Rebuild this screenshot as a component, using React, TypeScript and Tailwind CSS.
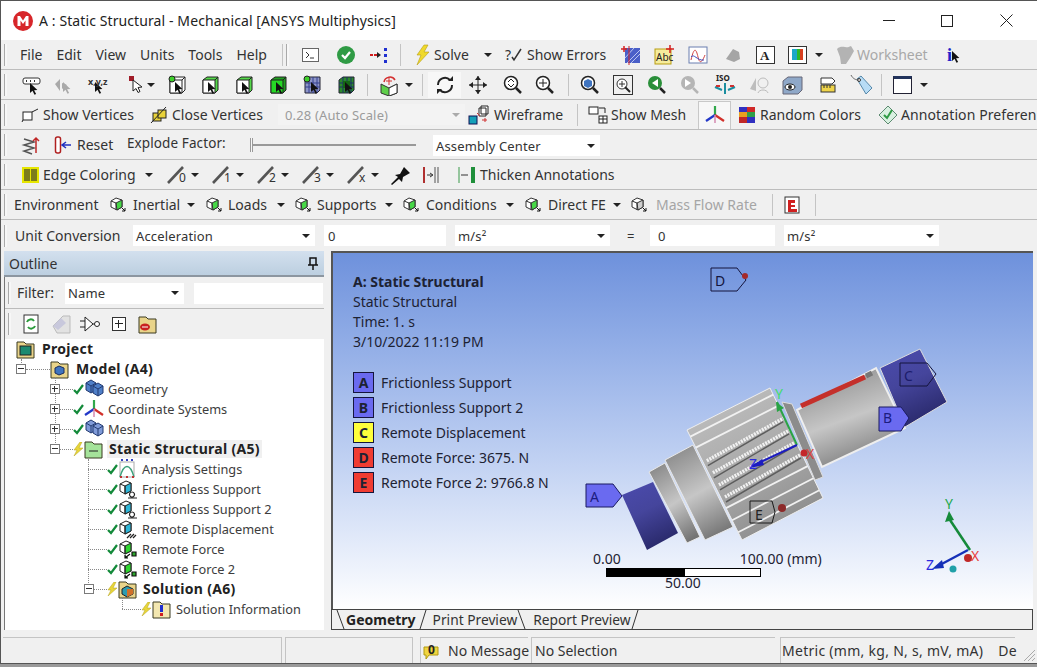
import type { ReactNode } from "react";

const Svg = ({ children, w = 20, h = 20, className = "" }: { children: ReactNode; w?: number; h?: number; className?: string }) => (
  <svg width={w} height={h} viewBox={`0 0 ${w} ${h}`} className={`shrink-0 ${className}`}>
    {children}
  </svg>
);

const Caret = ({ className = "" }: { className?: string }) => (
  <span className={`inline-block h-0 w-0 shrink-0 border-x-[4px] border-t-[4px] border-x-transparent border-t-[#222] ${className}`} />
);

const Grip = () => <span className="mr-1 ml-[3px] h-[22px] w-[3px] shrink-0 border-l border-[#a9a9a9] bg-[#f7f7f7]" />;
const Sep = ({ className = "" }: { className?: string }) => <span className={`h-[22px] w-0 shrink-0 border-l border-[#c4c4c4] ${className}`} />;

const Cursor = ({ x, y, c = "#111" }: { x: number; y: number; c?: string }) => (
  <path d={`M${x} ${y}l0 10 2.5-2.2 2 4 1.6-.8-2-3.8 3.3-.3z`} fill={c} />
);

const BoxCursor = ({ fill = "#fff", top = "#fff", dot = false }: { fill?: string; top?: string; dot?: boolean }) => (
  <Svg>
    <path d="M3 5l4-3h11v13l-3 3H3z" fill={top} stroke="#222" />
    <path d="M3 5h12v13H3z" fill={fill} stroke="#222" />
    <path d="M15 5l3-3" stroke="#222" />
    {dot && <circle cx="5" cy="4" r="3" fill="#3ecf2b" stroke="#222" />}
    <Cursor x={8} y={7} />
  </Svg>
);

const MeshBox = ({ dark = false }: { dark?: boolean }) => (
  <Svg>
    <path d="M3 5l4-3h11v13l-3 3H3z" fill={dark ? "#2b8a2b" : "#8c94c9"} stroke="#223" />
    <path d="M3 8h15M3 12h15M7 2v16M11 2v16M15 2v16" stroke={dark ? "#1c2f6b" : "#35408e"} strokeWidth="1" />
    {dark ? <rect x="7" y="6" width="7" height="7" fill="#146614" /> : <circle cx="5" cy="4" r="3" fill="#3ecf2b" stroke="#222" />}
    <Cursor x={9} y={7} />
  </Svg>
);

const Mag = ({ children, c = "#222" }: { children?: ReactNode; c?: string }) => (
  <Svg>
    <circle cx="8" cy="8" r="6.5" fill="#fff" stroke={c} strokeWidth="1.5" />
    <path d="M13 13l5 5" stroke={c} strokeWidth="2.5" />
    {children}
  </Svg>
);

const SmallCube = ({ face = "#fff" }: { face?: string }) => (
  <Svg w={19} h={16}>
    <path d="M2 4l5-3 6 2v7l-5 3-6-3z" fill="#fff" stroke="#333" />
    <path d="M7 6l6-3v7l-5 3z" fill={face} stroke="#333" />
    <path d="M2 4l5 2v7" fill="none" stroke="#333" />
    <path d="M13 11l3 3M13 14h3v-3" stroke="#111" strokeWidth="1" fill="none" />
  </Svg>
);

const Edge = ({ n }: { n: string }) => (
  <span className="flex items-center">
    <span className="relative h-[20px] w-[24px]">
      <Svg w={24} h={20}>
        <path d="M2 18L17 2" stroke="#555" strokeWidth="2.6" />
      </Svg>
      <span className="absolute top-[6px] left-[13px] text-[12px] leading-[14px] text-[#333]">{n}</span>
    </span>
    <Caret className="ml-[1px]" />
  </span>
);

const Check = () => (
  <Svg w={11} h={12}>
    <path d="M1 7l3 3 6-8" fill="none" stroke="#138a3a" strokeWidth="2.2" />
  </Svg>
);

const Bolt = () => (
  <Svg w={11} h={14}>
    <path d="M7 0L1 8h3l-3 6 9-8H6l3-6z" fill="#e8d63a" stroke="#b5a31c" strokeWidth=".5" />
  </Svg>
);

const Folder = ({ children, c = "#e9d48a" }: { children?: ReactNode; c?: string }) => (
  <Svg w={19} h={20}>
    <path d="M1 3h7l2 2h8v14H1z" fill={c} stroke="#3a3a22" />
    {children}
  </Svg>
);

const TreeCube = ({ face, mark }: { face: string; mark: "support" | "disp" | "force" }) => (
  <Svg w={20} h={20}>
    <path d="M2 5l6-3 5 2v8l-6 3-5-3z" fill="#fff" stroke="#222" />
    <path d="M7 7l6-3v8l-6 3z" fill={face} stroke="#222" />
    <path d="M2 5l5 2v8" fill="none" stroke="#222" />
    {mark === "support" && <path d="M14 13a2.5 2.5 0 1 0 .01 0M10 19h9" fill="none" stroke="#222" strokeWidth="1.2" />}
    {mark === "disp" && <path d="M9 19l4-4M12 19l4-4M15 19l3-3" stroke="#222" strokeWidth="1.3" />}
    {mark === "force" && <path d="M14 13h4v4h-4zM12 15l-5 4M7 16v3h3" fill="#2da82d" stroke="#111" strokeWidth="1.2" />}
  </Svg>
);

const Triad = () => (
  <Svg w={20} h={20}>
    <path d="M10 10V1" stroke="#31a84b" strokeWidth="2.2" />
    <path d="M10 10L1 16" stroke="#2338c8" strokeWidth="2.2" />
    <path d="M10 10l9 6" stroke="#d2302a" strokeWidth="2.2" />
    <path d="M10 10v8" stroke="#d58ab0" strokeWidth="1.5" />
  </Svg>
);

const Expander = ({ open }: { open: boolean }) => (
  <span className="relative h-[10px] w-[10px] shrink-0 border border-[#7b7b7b] bg-white">
    <span className="absolute top-[3px] left-[1px] h-px w-[6px] bg-[#333]" />
    {!open && <span className="absolute top-[1px] left-[3px] h-[6px] w-px bg-[#333]" />}
  </span>
);

const Blocks = ({ c = "#4f7fc8" }: { c?: string }) => (
  <Svg w={20} h={20}>
    <path d="M2 4l5-3 5 3v7l-5 3-5-3z" fill={c} stroke="#223a70" />
    <path d="M9 7l5-3 5 3v7l-5 3-5-3z" fill={c} stroke="#223a70" />
    <path d="M2 4l5 3 5-3M7 7v7M9 7l5 3 5-3M14 10v7" fill="none" stroke="#223a70" />
  </Svg>
);

type TreeRow = {
  label: string;
  indent: string;
  textGap: string;
  bold?: boolean;
  open?: boolean;
  status?: "check" | "bolt";
  icon: ReactNode;
  highlight?: boolean;
};

const treeRows: TreeRow[] = [
  {
    label: "Project",
    indent: "ml-[11px]",
    bold: true,
    textGap: "ml-[7px]",
    icon: (
      <Folder>
        <rect x="4" y="7" width="11" height="9" fill="#1c8a70" stroke="#222" />
      </Folder>
    ),
  },
  {
    label: "Model (A4)",
    indent: "ml-[11px]",
    bold: true,
    open: true,
    textGap: "ml-[7px]",
    icon: (
      <Folder>
        <path d="M5 9l4-2 5 2v5l-5 2-4-2z" fill="#3f74c0" stroke="#1b2d5c" />
      </Folder>
    ),
  },
  { label: "Geometry", indent: "ml-[45px]", open: false, status: "check", textGap: "ml-[4px]", icon: <Blocks /> },
  { label: "Coordinate Systems", indent: "ml-[45px]", open: false, status: "check", textGap: "ml-[4px]", icon: <Triad /> },
  { label: "Mesh", indent: "ml-[45px]", open: false, status: "check", textGap: "ml-[4px]", icon: <Blocks c="#7f9ad8" /> },
  {
    label: "Static Structural (A5)",
    indent: "ml-[45px]",
    bold: true,
    open: true,
    status: "bolt",
    highlight: true,
    textGap: "ml-[4px]",
    icon: (
      <Folder c="#a5e39a">
        <path d="M5 12h9" stroke="#222" />
      </Folder>
    ),
  },
  {
    label: "Analysis Settings",
    indent: "ml-[83px]",
    status: "check",
    textGap: "ml-[6px]",
    icon: (
      <Svg w={18} h={20}>
        <rect x="2" y="3" width="14" height="15" fill="#fff" stroke="#aaa" />
        <path d="M2 18C6 4 12 4 16 18" fill="none" stroke="#3aa07a" strokeWidth="1.4" />
        <path d="M3 1h2M8 1h2M13 1h2" stroke="#3340c0" strokeWidth="2" />
        <path d="M2 18h2M8 18h2M14 18h2" stroke="#c03333" strokeWidth="2" />
      </Svg>
    ),
  },
  { label: "Frictionless Support", indent: "ml-[83px]", status: "check", textGap: "ml-[4px]", icon: <TreeCube face="#2eb6d8" mark="support" /> },
  { label: "Frictionless Support 2", indent: "ml-[83px]", status: "check", textGap: "ml-[4px]", icon: <TreeCube face="#2eb6d8" mark="support" /> },
  { label: "Remote Displacement", indent: "ml-[83px]", status: "check", textGap: "ml-[4px]", icon: <TreeCube face="#2eb6d8" mark="disp" /> },
  { label: "Remote Force", indent: "ml-[83px]", status: "check", textGap: "ml-[4px]", icon: <TreeCube face="#2fd62f" mark="force" /> },
  { label: "Remote Force 2", indent: "ml-[83px]", status: "check", textGap: "ml-[4px]", icon: <TreeCube face="#2fd62f" mark="force" /> },
  {
    label: "Solution (A6)",
    indent: "ml-[79px]",
    bold: true,
    open: true,
    status: "bolt",
    textGap: "ml-[6px]",
    icon: (
      <Folder>
        <path d="M4 10l5-3 6 3v5l-6 3-5-3z" fill="#2c9cb0" stroke="#222" />
        <path d="M9 10l6 0v5l-6 3z" fill="#d0702a" />
      </Folder>
    ),
  },
  {
    label: "Solution Information",
    indent: "ml-[117px]",
    status: "bolt",
    textGap: "ml-[5px]",
    icon: (
      <Folder c="#f3e7b0">
        <rect x="8" y="6" width="3" height="7" fill="#2030d0" />
        <rect x="8" y="14" width="3" height="3" fill="#d02020" />
      </Folder>
    ),
  },
];

const legend = [
  { k: "A", c: "bg-[#6a6af0]", t: "Frictionless Support" },
  { k: "B", c: "bg-[#6a6af0]", t: "Frictionless Support 2" },
  { k: "C", c: "bg-[#ffff3c]", t: "Remote Displacement" },
  { k: "D", c: "bg-[#f03c32]", t: "Remote Force: 3675. N" },
  { k: "E", c: "bg-[#f03c32]", t: "Remote Force 2: 9766.8 N" },
];

const Row = ({ children, className = "" }: { children: ReactNode; className?: string }) => (
  <div className={`flex h-[30px] shrink-0 items-center overflow-hidden whitespace-nowrap border-b border-[#bdbdbd] [&>*]:shrink-0 ${className}`}>
    <Grip />
    {children}
  </div>
);

const Combo = ({ text, className = "", dim = false }: { text: string; className?: string; dim?: boolean }) => (
  <span className={`flex h-[21px] shrink-0 items-center justify-between pr-[5px] pl-[3px] text-[13px] tracking-[0.15px] ${dim ? "bg-[#f3f3f3] text-[#9b9b9b]" : "bg-white"} ${className}`}>
    <span>{text}</span>
    <Caret className={dim ? "border-t-[#aaa]" : ""} />
  </span>
);

// model drawing, coords taken from the page (origin at 332,252)
const P = (pts: [number, number][]) => pts.map(([x, y]) => `${x - 332},${y - 252}`).join(" ");
const lerp = (a: number, b: number, t: number) => a + (b - a) * t;
const teeth = [0.06, 0.16, 0.27, 0.38, 0.49, 0.6, 0.71, 0.82, 0.93];

const GearTeeth = () => (
  <g>
    {teeth.map((t, i) => {
      const x1 = lerp(687, 742, t) - 332;
      const y1 = lerp(430, 540, t) - 252;
      const x2 = lerp(770, 823, t) - 332;
      const y2 = lerp(388, 498, t) - 252;
      const busy = i > 1 && i < 6;
      return (
        <g key={t}>
          {busy && <line x1={x1 + 6} y1={y1 + 6} x2={x2 - 1} y2={y2 + 4} stroke="#5d5d5d" strokeWidth="1.5" />}
          <line
            x1={x1 + (busy ? 5 : 0)}
            y1={y1 + (busy ? 1 : 0)}
            x2={x2}
            y2={y2}
            stroke="#f1f1f1"
            strokeWidth={busy ? 3.5 : 1.8}
            strokeDasharray={busy ? "2 1" : undefined}
          />
        </g>
      );
    })}
  </g>
);

const Model = () => (
  <svg className="absolute inset-0 h-full w-full" viewBox="1 1 700 356">
    <defs>
      <linearGradient id="blue" x1="0" y1="0" x2=".4" y2="1">
        <stop offset="0" stopColor="#4b4bae" />
        <stop offset=".5" stopColor="#45459c" />
        <stop offset="1" stopColor="#2b2b6e" />
      </linearGradient>
      <linearGradient id="grey" x1=".3" y1="0" x2=".7" y2="1">
        <stop offset="0" stopColor="#8d8d8d" />
        <stop offset=".5" stopColor="#c6c6c6" />
        <stop offset="1" stopColor="#747474" />
      </linearGradient>
      <linearGradient id="gear" x1=".2" y1="0" x2=".7" y2="1">
        <stop offset="0" stopColor="#c0c0c0" />
        <stop offset=".55" stopColor="#a8a8a8" />
        <stop offset="1" stopColor="#8a8a8a" />
      </linearGradient>
    </defs>
    <polygon points={P([[622, 495], [653, 482], [678, 533], [647, 550]])} fill="url(#blue)" />
    <polygon points={P([[649, 472], [665, 463], [700, 537], [687, 543]])} fill="url(#grey)" stroke="#e9e9e9" />
    <polygon points={P([[665, 460], [693, 445], [733, 527], [705, 540]])} fill="url(#grey)" stroke="#e9e9e9" />
    <polygon points={P([[687, 430], [770, 388], [823, 498], [742, 540]])} fill="url(#gear)" stroke="#eee" />
    <GearTeeth />
    <polygon points={P([[782, 402], [792, 404], [823, 477], [815, 480]])} fill="#8c8c8c" stroke="#ddd" />
    <polygon points={P([[797, 410], [876, 368], [905, 428], [822, 467]])} fill="url(#grey)" stroke="#eee" strokeWidth="2" />
    <polygon points={P([[880, 368], [920, 349], [947, 402], [905, 427]])} fill="url(#blue)" stroke="#ddd" />
    <line x1={801 - 332} y1={406 - 252} x2={865 - 332} y2={377 - 252} stroke="#c4302b" strokeWidth="5" />
    <line x1={866 - 332} y1={376 - 252} x2={872 - 332} y2={373 - 252} stroke="#777" strokeWidth="5" />

    {/* center triad */}
    <line x1={797 - 332} y1={445 - 252} x2={777 - 332} y2={402 - 252} stroke="#2aa345" strokeWidth="2" />
    <polygon points="444,150 452,156 445,160" fill="#2aa345" />
    <line x1={797 - 332} y1={445 - 252} x2={752 - 332} y2={466 - 252} stroke="#1c1cc0" strokeWidth="2" />
    <polygon points="418,216 430,207 432,213" fill="#1c1cc0" />
    <circle cx={804 - 332} cy={453 - 252} r="3.5" fill="#c4282b" />
    <text x={443} y={147} fontSize="14" fill="#3fdc6a" fontFamily="Noto Sans">Y</text>
    <text x={417} y={217} fontSize="14" fill="#2a2ae0" fontFamily="Noto Sans">Z</text>
    <text x={474} y={207} fontSize="14" fill="#e04040" fontFamily="Noto Sans">X</text>

    {/* probes */}
    <polygon points={P([[586, 484], [613, 484], [622, 496], [613, 507], [586, 507]])} fill="#6a6af0" stroke="#1a1a60" />
    <text x={258} y={250} fontSize="14" fill="#1c1c80" fontFamily="Noto Sans">A</text>
    <polygon points={P([[879, 407], [901, 407], [909, 418], [901, 431], [879, 431]])} fill="#6a6af0" stroke="#1a1a60" />
    <text x={551} y={171} fontSize="14" fill="#1c1c80" fontFamily="Noto Sans">B</text>
    <polygon points={P([[900, 363], [927, 363], [936, 374], [927, 386], [900, 386]])} fill="none" stroke="#15153d" />
    <text x={572} y={129} fontSize="14" fill="#1c1c6b" fontFamily="Noto Sans">C</text>
    <polygon points={P([[711, 268], [737, 268], [746, 280], [737, 291], [711, 291]])} fill="none" stroke="#15153d" />
    <text x={383} y={34} fontSize="14" fill="#15153d" fontFamily="Noto Sans">D</text>
    <circle cx={745 - 332} cy={276 - 252} r="3" fill="#a52a2a" />
    <polygon points={P([[750, 501], [772, 501], [775, 512], [772, 523], [750, 523]])} fill="none" stroke="#1a1a1a" />
    <text x={423} y={268} fontSize="14" fill="#222" fontFamily="Noto Sans">E</text>
    <circle cx={782 - 332} cy={508 - 252} r="4" fill="#8c2a2a" />

    {/* corner triad */}
    <line x1={638} y1={298} x2={618} y2={268} stroke="#158a3a" strokeWidth="2.5" />
    <polygon points="617,259 613,270 622,268" fill="#158a3a" />
    <line x1={636} y1={298} x2={606} y2={314} stroke="#1530b8" strokeWidth="2.5" />
    <polygon points="600,317 610,308 612,316" fill="#1530b8" />
    <circle cx={636} cy={306} r="4" fill="#c02828" />
    <circle cx={621} cy={317} r="3.5" fill="#20a0a8" />
    <text x={613} y={257} fontSize="14" fill="#1ca84a" fontFamily="Noto Sans">Y</text>
    <text x={594} y={318} fontSize="14" fill="#2a2ae0" fontFamily="Noto Sans">Z</text>
    <text x={639} y={309} fontSize="14" fill="#e84040" fontFamily="Noto Sans">X</text>
  </svg>
);

export default function App() {
  return (
    <div className="h-[667px] w-[1037px] overflow-hidden bg-[#9a9a9a]">
      <div className="flex h-[664px] flex-col border-t border-b border-l border-[#555] bg-[#f0f0f0] font-['Noto_Sans',sans-serif] text-[14px] leading-[18px] text-[#333]">
        {/* title bar */}
        <div className="flex h-[39px] shrink-0 items-center bg-white pl-[12px] text-[#222]">
          <Svg w={20} h={20}>
            <circle cx="10" cy="10" r="10" fill="#d7262a" />
            <path d="M4.5 15V5h2.500l3 4.500L13 5h2.500v10h-3V9.500L10 13 7.500 9.500V15z" fill="#fff" />
          </Svg>
          <span className="ml-[6px] tracking-[0.1px]">A : Static Structural - Mechanical [ANSYS Multiphysics]</span>
          <span className="ml-auto flex items-center">
            <span className="mr-[46px] h-px w-[12px] bg-[#222]" />
            <span className="mr-[47px] h-[12px] w-[12px] border border-[#222]" />
            <span className="mr-[24px]">
              <Svg w={13} h={13}>
                <path d="M.5.5l12 12M12.500.5l-12 12" stroke="#222" />
              </Svg>
            </span>
          </span>
        </div>

        {/* File menu row */}
        <Row>
          <span className="ml-[9px] flex w-[247px] gap-[14px]">
            <span>File</span>
            <span>Edit</span>
            <span>View</span>
            <span>Units</span>
            <span>Tools</span>
            <span>Help</span>
          </span>
          <Sep className="ml-[15px]" />
          <Grip />
          <Svg w={18} h={16} className="ml-[9px]">
            <rect x=".5" y="1.500" width="16" height="13" fill="#fff" stroke="#666" />
            <path d="M4 5l3 3-3 3M8 11h4" fill="none" stroke="#333" />
          </Svg>
          <span className="ml-[16px]">
            <Svg w={20} h={20}>
              <circle cx="10" cy="10" r="9" fill="#2f9b45" />
              <path d="M6 10l3 3 5-6" fill="none" stroke="#fff" strokeWidth="2.200" />
            </Svg>
          </span>
          <span className="ml-[13px]">
            <Svg w={20} h={18}>
              <path d="M1 9h8" stroke="#d01c1c" strokeWidth="2" strokeDasharray="3 1" />
              <path d="M8 6l4 3-4 3z" fill="#222" />
              <rect x="15" y="2" width="3" height="3" fill="#2030d0" />
              <rect x="15" y="8" width="3" height="3" fill="#2030d0" />
              <rect x="15" y="14" width="3" height="3" fill="#2030d0" />
            </Svg>
          </span>
          <Sep className="ml-[11px]" />
          <span className="ml-[13px]">
            <Svg w={18} h={22}>
              <path d="M10 1L3 11h4l-4 10 12-13h-5l4-7z" fill="#efd92c" stroke="#b79d12" strokeWidth=".6" />
            </Svg>
          </span>
          <span className="ml-[2px] w-[35px]">Solve</span>
          <Caret className="ml-[15px]" />
          <span className="ml-[13px] flex w-[22px] items-center">
            <span>?</span>
            <Svg w={12} h={14}>
              <path d="M1 9l2 3 7-11" fill="none" stroke="#333" strokeWidth="1.500" />
            </Svg>
          </span>
          <span className="w-[79px]">Show Errors</span>
          <span className="ml-[13px]">
            <Svg w={22} h={20}>
              <rect x="6" y="3" width="15" height="15" fill="#4a5fc8" />
              <path d="M8 18l13-13M12 18l9-9M6 13l9-10" stroke="#b9c4ef" />
              <path d="M5 1v6M2 4h6" stroke="#d42020" strokeWidth="1.500" />
              <path d="M10 1v19" stroke="#d42020" />
            </Svg>
          </span>
          <span className="ml-[13px]">
            <Svg w={22} h={20}>
              <rect x="1" y="4" width="16" height="15" fill="#f6ec9c" stroke="#b79d12" />
              <text x="2" y="16" fontSize="10" fill="#222" fontFamily="Noto Sans">Abc</text>
              <path d="M16 0v8M12 4h8" stroke="#d42020" strokeWidth="1.500" />
            </Svg>
          </span>
          <span className="ml-[12px]">
            <Svg w={20} h={20}>
              <rect x="1" y="2" width="18" height="16" fill="#fff" stroke="#6a7fb0" />
              <path d="M3 15C6 2 8 3 10 12s5 3 7-2" fill="none" stroke="#d04040" />
              <path d="M3 12C6 8 9 16 16 15" fill="none" stroke="#4050c0" />
            </Svg>
          </span>
          <span className="ml-[17px]">
            <Svg w={16} h={16}>
              <path d="M1 12L8 2l6 3 1 7-6 3z" fill="#a5a5a5" />
            </Svg>
          </span>
          <span className="ml-[15px]">
            <Svg w={20} h={20}>
              <rect x=".5" y="1.500" width="18" height="17" fill="#fff" stroke="#333" />
              <text x="4" y="15" fontSize="13" fontWeight="700" fill="#222" fontFamily="Liberation Serif">A</text>
            </Svg>
          </span>
          <span className="ml-[12px]">
            <Svg w={20} h={20}>
              <rect x=".5" y="1.500" width="18" height="17" fill="#fff" stroke="#333" />
              <rect x="4" y="4" width="5" height="11" fill="#1ca8c8" />
              <rect x="9" y="4" width="3" height="11" fill="#2cb82c" />
              <rect x="12" y="4" width="3" height="11" fill="#d84020" />
            </Svg>
          </span>
          <Caret className="ml-[7px]" />
          <span className="ml-[12px]">
            <Svg w={20} h={20}>
              <path d="M2 4c3-3 6-2 8-2s2 1 6-1l3 5-4 7-4 6H6l-1-7z" fill="#b3b3b3" />
            </Svg>
          </span>
          <span className="ml-[2px] w-[71px] text-[#a8a8a8]">Worksheet</span>
          <span className="ml-[19px] font-['Liberation_Serif',serif] text-[18px] font-bold text-[#2222c8]">i</span>
          <Svg w={11} h={16} className="mt-[6px]">
            <Cursor x={0} y={1} />
          </Svg>
        </Row>

        {/* selection row */}
        <Row>
          <Svg w={20} h={20} className="ml-[11px]">
            <rect x="1" y="3" width="17" height="6" rx="2" fill="#fff" stroke="#333" />
            <path d="M4 6h1M8 6h1M12 6h1" stroke="#333" strokeWidth="2" />
            <Cursor x={8} y={8} />
          </Svg>
          <Svg w={20} h={20} className="ml-[12px]">
            <path d="M1 9l5-5v12zM8 8l5 2-5 4z" fill="#a9a9a9" />
            <Cursor x={9} y={7} c="#a9a9a9" />
          </Svg>
          <span className="relative ml-[14px] h-[20px] w-[22px]">
            <span className="absolute top-[-2px] left-0 text-[9px] font-bold text-[#333]">x,y,z</span>
            <Svg w={20} h={20}>
              <Cursor x={7} y={7} />
            </Svg>
          </span>
          <Svg w={18} h={20} className="ml-[18px]">
            <rect x="1" y="1" width="5" height="5" fill="#a01c28" />
            <path d="M5 5v11l3-2.500 2 4 2-1-2-4 4-.5z" fill="#fff" stroke="#222" />
          </Svg>
          <Caret className="ml-[1px]" />
          <span className="ml-[12px]">
            <BoxCursor dot />
          </span>
          <span className="ml-[13px]">
            <BoxCursor top="#55d84a" />
          </span>
          <span className="ml-[14px]">
            <BoxCursor top="#55d84a" />
          </span>
          <span className="ml-[14px]">
            <BoxCursor fill="#25d825" top="#1fa01f" />
          </span>
          <span className="ml-[14px]">
            <MeshBox />
          </span>
          <span className="ml-[14px]">
            <MeshBox dark />
          </span>
          <Sep className="ml-[11px]" />
          <span className="ml-[10px]">
            <Svg w={22} h={22}>
              <path d="M3 10l8 4 8-4v9l-8 3-8-3z" fill="#5fcf4a" stroke="#333" />
              <path d="M11 14l8-4v9l-8 3z" fill="#fff" stroke="#333" />
              <path d="M6 8a6 6 0 0 1 11-2" fill="none" stroke="#d43030" strokeWidth="1.500" />
              <path d="M11 3v8M8 7h6" stroke="#d43030" />
            </Svg>
          </span>
          <Caret className="ml-[5px]" />
          <Sep className="ml-[9px]" />
          <span className="ml-[5px] flex h-[26px] w-[33px] items-center justify-center bg-[#f7f7f7]">
            <Svg w={20} h={20}>
              <path d="M3 10a7 7 0 0 1 12-5M17 10a7 7 0 0 1-12 5" fill="none" stroke="#222" strokeWidth="2" />
              <path d="M13 6h5V1zM7 14H2v5z" fill="#222" />
            </Svg>
          </span>
          <span className="ml-[7px]">
            <Svg w={20} h={20}>
              <path d="M10 1v18M1 10h18" stroke="#222" />
              <path d="M10 1l-3 4h6zM10 19l-3-4h6zM1 10l4-3v6zM19 10l-4-3v6z" fill="#222" />
            </Svg>
          </span>
          <span className="ml-[15px]">
            <Mag>
              <path d="M5 7l3-3 3 3M5 9l3 3 3-3" fill="none" stroke="#222" />
            </Mag>
          </span>
          <span className="ml-[12px]">
            <Mag>
              <path d="M8 4v8M4 8h8" stroke="#222" />
            </Mag>
          </span>
          <Sep className="ml-[13px]" />
          <span className="ml-[11px]">
            <Mag>
              <path d="M4 6l4-2 4 2v5l-4 2-4-2z" fill="#3f74c0" />
            </Mag>
          </span>
          <span className="ml-[13px] flex h-[20px] w-[20px] items-center justify-center border border-[#333]">
            <Svg w={16} h={16}>
              <circle cx="7" cy="7" r="5" fill="#fff" stroke="#333" />
              <path d="M10 10l5 5" stroke="#222" strokeWidth="2" />
              <path d="M7 4v6M4 7h6" stroke="#333" />
            </Svg>
          </span>
          <span className="ml-[14px]">
            <Svg>
              <circle cx="8" cy="8" r="7" fill="#2a8f3a" />
              <path d="M13 13l5 5" stroke="#222" strokeWidth="2.500" />
              <path d="M11 4L5 8l6 4z" fill="#fff" />
            </Svg>
          </span>
          <span className="ml-[13px]">
            <Svg>
              <circle cx="8" cy="8" r="7" fill="#b5b5b5" />
              <path d="M13 13l5 5" stroke="#b5b5b5" strokeWidth="2.500" />
              <path d="M5 4l6 4-6 4z" fill="#fff" />
            </Svg>
          </span>
          <span className="ml-[13px]">
            <Svg w={24} h={24}>
              <text x="3" y="8" fontSize="8" fontWeight="700" fill="#222" fontFamily="Noto Sans">ISO</text>
              <path d="M12 10v11M2 14l7 3M22 14l-7 3" stroke="#1a8ea0" strokeWidth="2" />
              <path d="M3 13h4M17 13h4" stroke="#d03030" strokeWidth="2" />
            </Svg>
          </span>
          <span className="ml-[11px]">
            <Svg w={22} h={20}>
              <path d="M2 14L8 3v13z" fill="#bdbdbd" />
              <circle cx="15" cy="8" r="5" fill="none" stroke="#bbb" />
              <path d="M10 18c1-4 9-4 10 0" fill="none" stroke="#bbb" />
            </Svg>
          </span>
          <span className="ml-[12px]">
            <Svg w={22} h={22}>
              <path d="M1 7l5-4h14v13l-4 4H1z" fill="#8fa8c8" stroke="#667" />
              <ellipse cx="8" cy="13" rx="5" ry="3" fill="#fff" stroke="#222" />
              <circle cx="8" cy="13" r="2" fill="#222" />
            </Svg>
          </span>
          <span className="ml-[14px]">
            <Svg w={20} h={20}>
              <path d="M3 3h11l3 3-3 3H3z" fill="#fff" stroke="#333" />
              <rect x="3" y="10" width="14" height="7" fill="#efd44a" stroke="#333" />
              <path d="M6 10v3M9 10v3M12 10v3" stroke="#333" />
            </Svg>
          </span>
          <span className="ml-[12px]">
            <Svg w={24} h={22}>
              <path d="M7 5l4-3 11 12-6 6z" fill="#b8dcf5" stroke="#5588aa" />
              <circle cx="9" cy="6" r="1.500" fill="#fff" stroke="#333" />
              <path d="M1 1c2 4 5 5 8 5" fill="none" stroke="#666" />
            </Svg>
          </span>
          <Sep className="ml-[7px]" />
          <span className="ml-[11px] h-[18px] w-[19px] border border-[#223] border-t-[3px] border-t-[#22335c] bg-white" />
          <Caret className="ml-[8px]" />
        </Row>

        {/* display row */}
        <Row>
          <Svg w={20} h={18} className="ml-[10px]">
            <rect x="2" y="6" width="9" height="8" fill="#fff" stroke="#222" />
            <path d="M11 6l6-3M1 16l1-2" stroke="#222" />
          </Svg>
          <span className="ml-[2px] w-[90px]">Show Vertices</span>
          <Svg w={20} h={18} className="ml-[17px]">
            <rect x="3" y="7" width="8" height="8" fill="#e8d23a" stroke="#222" />
            <rect x="8" y="4" width="8" height="8" fill="#e8d23a" stroke="#222" />
            <path d="M1 17L16 1" stroke="#222" />
          </Svg>
          <span className="ml-[2px] w-[90px]">Close Vertices</span>
          <Combo text="0.28 (Auto Scale)" dim className="ml-[16px] w-[187px] pl-[7px]" />
          <span className="ml-[3px]">
            <Svg w={24} h={22}>
              <rect x="1" y="12" width="8" height="8" fill="#15a0b8" stroke="#115" />
              <path d="M13 2h7v8h-7zM11 4h7v8h-7z" fill="#fff" stroke="#222" />
              <path d="M9 9l3 3M14 16h5M17 14v4" stroke="#d03030" />
            </Svg>
          </span>
          <span className="ml-[2px] w-[69px]">Wireframe</span>
          <Sep className="ml-[14px]" />
          <Svg w={22} h={20} className="ml-[10px]">
            <rect x="1" y="2" width="9" height="7" fill="#fff" stroke="#222" />
            <rect x="11" y="11" width="8" height="7" fill="#fff" stroke="#222" />
            <path d="M15 11v7M11 14h8M11 3h6v5" fill="none" stroke="#222" />
          </Svg>
          <span className="ml-[1px] w-[76px]">Show Mesh</span>
          <span className="ml-[11px] flex h-[28px] w-[33px] items-center justify-center border-x border-t border-[#c8c8c8] bg-[#f7f7f7]">
            <Triad />
          </span>
          <Svg w={16} h={16} className="ml-[8px]">
            <rect width="8" height="5" fill="#3030c0" />
            <rect x="8" width="8" height="5" fill="#d02828" />
            <rect y="5" width="8" height="5" fill="#e8a020" />
            <rect x="8" y="5" width="8" height="5" fill="#2fa04a" />
            <rect y="10" width="8" height="6" fill="#c02828" />
            <rect x="8" y="10" width="8" height="6" fill="#3030c0" />
          </Svg>
          <span className="ml-[5px] w-[102px]">Random Colors</span>
          <Svg w={20} h={20} className="ml-[16px]">
            <path d="M10 1l9 9-9 9-9-9z" fill="#d8f0e0" stroke="#5c8a70" />
            <path d="M6 10l3 3 5-8" fill="none" stroke="#2f9b45" strokeWidth="2" />
          </Svg>
          <span className="ml-[3px] tracking-[0.1px]">Annotation Preferen</span>
        </Row>

        {/* explode row */}
        <Row>
          <Svg w={20} h={20} className="ml-[10px]">
            <path d="M3 4l10 3-10 3 10 3-10 3 8 3" fill="none" stroke="#555" strokeWidth="1.500" />
            <path d="M15 18V3M12 6l3-3 3 3" fill="none" stroke="#c02828" strokeWidth="1.500" />
          </Svg>
          <Svg w={20} h={18} className="ml-[13px]">
            <rect x="1.500" y="1" width="5" height="16" rx="2" fill="#fff" stroke="#b02020" strokeWidth="1.500" />
            <path d="M17 9H9M12 6L8 9l4 3" fill="none" stroke="#2030c0" strokeWidth="1.500" />
          </Svg>
          <span className="ml-[3px] w-[36px]">Reset</span>
          <span className="-mt-[3px] ml-[14px] w-[99px] text-[13.5px] tracking-[0.1px]">Explode Factor:</span>
          <span className="relative ml-[24px] h-[2px] w-[166px] bg-[#999]">
            <span className="absolute top-[-6px] left-0 h-[14px] w-[3px] border-x border-[#999] bg-[#f7f7f7]" />
          </span>
          <Combo text="Assembly Center" className="mt-[2px] ml-[17px] w-[167px]" />
        </Row>

        {/* edge coloring row */}
        <Row>
          <span className="ml-[11px] flex h-[16px] w-[17px] gap-px bg-[#e6e600] p-[2px]">
            <span className="flex-1 bg-[#7d7d1c]" />
            <span className="flex-1 bg-[#7d7d1c]" />
          </span>
          <span className="ml-[4px] w-[93px]">Edge Coloring</span>
          <Caret className="ml-[9px]" />
          <span className="ml-[13px] flex items-center gap-[12px]">
            <Edge n="0" />
            <Edge n="1" />
            <Edge n="2" />
            <Edge n="3" />
            <Edge n="x" />
          </span>
          <span className="ml-[11px]">
            <Svg w={22} h={20}>
              <path d="M1 19l7-7-3-2 5-1 4-7 6 6-7 4-1 5-3-3-7 6z" fill="#111" />
            </Svg>
          </span>
          <Svg w={18} h={18} className="ml-[10px]">
            <path d="M2 1v16" stroke="#b03030" strokeWidth="2" />
            <path d="M5 9h5M8 7l3 2-3 2" fill="none" stroke="#333" />
            <path d="M13 1v16M16 1v16" stroke="#555" />
          </Svg>
          <Svg w={20} h={18} className="ml-[18px]">
            <path d="M1 1v16" stroke="#3a9a4a" />
            <path d="M3 9h7" stroke="#333" />
            <rect x="13" y="1" width="4" height="16" fill="#1f8f3a" />
          </Svg>
          <span className="ml-[2px]">Thicken Annotations</span>
        </Row>

        {/* environment row */}
        <Row>
          <span className="ml-[3px] w-[86px]">Environment</span>
          <span className="ml-[9px]">
            <SmallCube face="#47d847" />
          </span>
          <span className="ml-[5px] w-[48px]">Inertial</span>
          <Caret className="ml-[6px]" />
          <span className="ml-[10px]">
            <SmallCube face="#47d847" />
          </span>
          <span className="ml-[4px] w-[39px]">Loads</span>
          <Caret className="ml-[10px]" />
          <span className="ml-[9px]">
            <SmallCube face="#47d847" />
          </span>
          <span className="ml-[4px] w-[59px]">Supports</span>
          <Caret className="ml-[9px]" />
          <span className="ml-[9px]">
            <SmallCube face="#47d847" />
          </span>
          <span className="ml-[5px] w-[72px]">Conditions</span>
          <Caret className="ml-[8px]" />
          <span className="ml-[10px]">
            <SmallCube face="#47d847" />
          </span>
          <span className="ml-[5px] w-[58px]">Direct FE</span>
          <Caret className="ml-[7px]" />
          <span className="ml-[9px]">
            <SmallCube face="#cfcfcf" />
          </span>
          <span className="ml-[7px] w-[101px] text-[#a5a5a5]">Mass Flow Rate</span>
          <Sep className="ml-[15px]" />
          <Svg w={22} h={20} className="ml-[10px]">
            <rect x="2" y="2" width="14" height="16" fill="#fff" stroke="#333" />
            <path d="M5 5h7v3h-4v2h4v2H8v2h6v3H5z" fill="#d02020" />
          </Svg>
          <Sep className="ml-[10px]" />
        </Row>

        {/* unit conversion row */}
        <Row className="h-[31px] border-b-0">
          <span className="ml-[4px] w-[105px]">Unit Conversion</span>
          <Combo text="Acceleration" className="ml-[13px] w-[182px]" />
          <span className="ml-[9px] flex h-[21px] w-[122px] items-center bg-white pl-[4px] text-[13px]">0</span>
          <Combo text="m/s²" className="ml-[9px] w-[155px]" />
          <span className="ml-[17px] w-[8px] text-[13px]">=</span>
          <span className="ml-[15px] flex h-[21px] w-[125px] items-center bg-white pl-[8px] text-[13px]">0</span>
          <Combo text="m/s²" className="ml-[9px] w-[155px]" />
        </Row>

        {/* main */}
        <div className="flex min-h-0 flex-1 pb-[7px]">
          {/* outline panel */}
          <div className="flex w-[323px] shrink-0 flex-col pl-[3px]">
            <div className="flex h-[26px] shrink-0 items-center justify-between border-b-2 border-[#8c96a0] bg-gradient-to-b from-[#d3e0ee] to-[#bccfe0] pt-[1px] pr-[5px] pl-[5px]">
              <span>Outline</span>
              <Svg w={12} h={14}>
                <path d="M3 1h6v7H3zM1 8h10M6 8v5" fill="none" stroke="#111" strokeWidth="1.500" />
              </Svg>
            </div>
            <div className="flex min-h-0 flex-1 flex-col border-l border-[#777] bg-white">
              <div className="flex h-[32px] shrink-0 items-center border-b border-[#bbb] bg-[#f0f0f0]">
                <Grip />
                <span className="ml-[2px] w-[37px]">Filter:</span>
                <Combo text="Name" className="mt-[1px] ml-[11px] w-[119px]" />
                <span className="mt-[1px] ml-[10px] h-[21px] w-[129px] bg-white" />
              </div>
              <div className="flex h-[30px] shrink-0 items-center bg-[#f0f0f0]">
                <Grip />
                <Svg w={18} h={20} className="ml-[7px]">
                  <rect x="2" y="1" width="14" height="18" fill="#fff" stroke="#333" />
                  <path d="M5 8a4 4 0 0 1 7-1M13 12a4 4 0 0 1-7 1" fill="none" stroke="#2a9a3a" strokeWidth="2" />
                </Svg>
                <Svg w={20} h={20} className="ml-[11px]">
                  <path d="M2 12L12 2h7v17H6z" fill="#e2e2e2" stroke="#bbb" />
                  <path d="M2 12l8-8 5 5-8 7z" fill="#c8c8dc" />
                </Svg>
                <Svg w={22} h={20} className="ml-[8px]">
                  <path d="M6 3v14l8-7zM1 7h5M1 13h5M14 10h3" fill="#fff" stroke="#222" />
                  <circle cx="18" cy="10" r="2.500" fill="#fff" stroke="#222" />
                </Svg>
                <span className="relative ml-[11px] h-[14px] w-[14px] border border-[#333] bg-white">
                  <span className="absolute top-[5px] left-[2px] h-px w-[8px] bg-[#222]" />
                  <span className="absolute top-[2px] left-[5px] h-[8px] w-px bg-[#222]" />
                </span>
                <span className="ml-[12px]">
                  <Folder>
                    <ellipse cx="7" cy="13" rx="5" ry="3.500" fill="#c82020" />
                    <path d="M4 13h6" stroke="#fff" />
                  </Folder>
                </span>
              </div>
              {/* tree */}
              <div className="relative flex-1">
                {/* tree guide lines */}
                <span className="absolute top-[20px] left-[16px] h-[6px] w-0 border-l border-dotted border-[#888]" />
                <span className="absolute top-[38px] left-[50px] h-[72px] w-0 border-l border-dotted border-[#888]" />
                <span className="absolute top-[120px] left-[83px] h-[130px] w-0 border-l border-dotted border-[#888]" />
                <span className="absolute top-[258px] left-[117px] h-[12px] w-0 border-l border-dotted border-[#888]" />
                {treeRows.map((r) => (
                  <div key={r.label} className={`flex h-[20px] items-center ${r.indent}`}>
                    {r.open !== undefined && <Expander open={r.open} />}
                    {r.open !== undefined && <span className={`h-0 border-t border-dotted border-[#888] ${r.status ? "w-[13px]" : "w-[24px]"}`} />}
                    {r.open === undefined && r.status && <span className="h-0 w-[19px] border-t border-dotted border-[#888]" />}
                    {r.status === "check" && <Check />}
                    {r.status === "bolt" && <Bolt />}
                    {r.icon}
                    <span
                      className={`${r.textGap} whitespace-nowrap ${r.bold ? "font-bold tracking-[0.3px] text-[#222]" : "text-[12.75px] text-[#3d3d3d]"} ${
                        r.highlight ? "bg-[#f0f0f0] px-[2px]" : ""
                      }`}
                    >
                      {r.label}
                    </span>
                  </div>
                ))}
              </div>
            </div>
          </div>

          {/* splitter */}
          <div className="w-[7px] shrink-0" />

          {/* viewport */}
          <div className="flex min-w-0 flex-1 flex-col pr-[4px]">
            <div className="relative h-[358px] shrink-0 border-t-2 border-l-2 border-[#555] bg-gradient-to-b from-[#6e91dc] to-white pt-[20px] pl-[20px] text-[#1d2233]">
              <Model />
              <div className="relative">
                <div className="font-bold">A: Static Structural</div>
                <div className="mt-[2px]">Static Structural</div>
                <div className="mt-[2px]">Time: 1. s</div>
                <div className="mt-[2px]">3/10/2022 11:19 PM</div>
                <div className="mt-[21px] flex flex-col gap-[4px]">
                  {legend.map((l) => (
                    <div key={l.k} className="flex items-center">
                      <span className={`flex h-[21px] w-[21px] items-center justify-center border border-[#15153d] font-bold ${l.c}`}>{l.k}</span>
                      <span className="ml-[7px]">{l.t}</span>
                    </div>
                  ))}
                </div>
              </div>
              {/* scale */}
              <div className="absolute top-[297px] left-[260px] w-[240px]">
                <div className="flex">
                  <span>0.00</span>
                  <span className="ml-[119px]">100.00 (mm)</span>
                </div>
                <div className="ml-[13px] flex h-[9px] w-[155px] border border-black bg-white">
                  <span className="w-[78px] bg-black" />
                </div>
                <div className="-mt-[3px] ml-[72px]">50.00</div>
              </div>
            </div>
            {/* tabs */}
            <div className="flex h-[21px] shrink-0 items-center border border-[#444] bg-[#f0f0f0] pl-[3px] text-[13.75px]">
              <Svg w={10} h={19}>
                <path d="M2 0l7 19" stroke="#333" />
              </Svg>
              <span className="ml-[1px] text-[14px] font-bold text-[#222]">Geometry</span>
              <Svg w={10} h={19} className="ml-[3px]">
                <path d="M1 19L7 0" stroke="#333" />
              </Svg>
              <span className="ml-[4px]">Print Preview</span>
              <Svg w={10} h={19}>
                <path d="M1 0l7 19" stroke="#333" />
              </Svg>
              <span className="ml-[6px]">Report Preview</span>
              <Svg w={10} h={19}>
                <path d="M1 19L7 0" stroke="#333" />
              </Svg>
            </div>
          </div>
        </div>

        {/* status bar */}
        <div className="flex h-[26px] shrink-0 whitespace-nowrap bg-[#f0f0f0]">
          <span className="ml-[2px] w-[279px] border-t border-r border-[#c4c4c4]" />
          <span className="ml-[3px] w-[128px] border-t border-l border-r border-[#c4c4c4]" />
          <span className="ml-[7px] flex w-[108px] items-center border-t border-l border-[#c4c4c4]">
            <Svg w={20} h={20} className="ml-[1px]">
              <path d="M2 6h14v8H7l-3 4v-4H2z" fill="#f0d540" stroke="#b09a10" />
              <text x="6" y="13" fontSize="12" fontWeight="700" fill="#222" fontFamily="Noto Sans">0</text>
            </Svg>
            <span className="ml-[6px]">No Message</span>
          </span>
          <span className="ml-[3px] flex w-[244px] items-center border-t border-l border-[#c4c4c4] pl-[3px]">No Selection</span>
          <span className="ml-[5px] flex w-[235px] items-center border-t border-l border-[#c4c4c4] pl-[1px] tracking-[0.28px]">
            Metric (mm, kg, N, s, mV, mA)
            <span className="ml-[15px]">De</span>
          </span>
          <Svg w={20} h={26} className="ml-[1px]">
            <path d="M8 24L19 13M12 24l7-7M16 24l3-3" stroke="#aaa" />
          </Svg>
        </div>
      </div>
    </div>
  );
}
